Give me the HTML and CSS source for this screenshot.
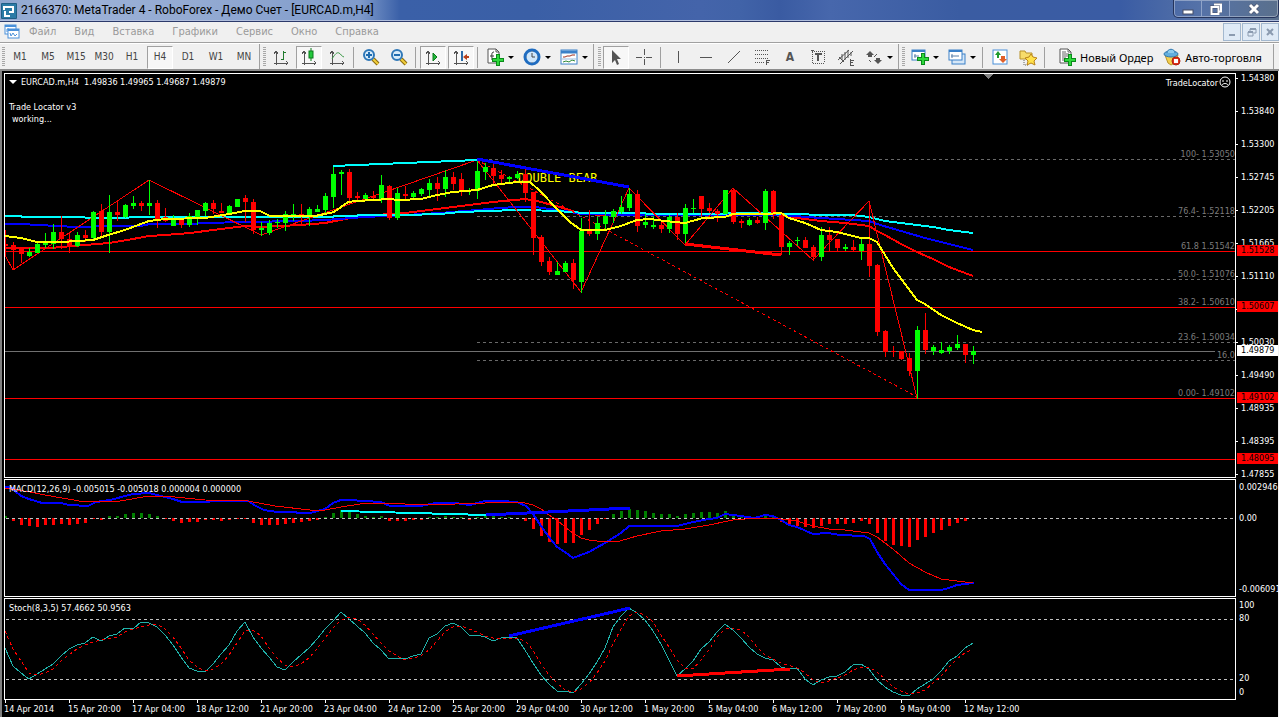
FILE: index.html
```html
<!DOCTYPE html>
<html lang="ru">
<head>
  <meta charset="UTF-8">
  <meta name="viewport" content="width=device-width, initial-scale=1.0">
  <title>MetaTrader 4 - EURCAD.m,H4</title>
  <link rel="stylesheet" href="styles.css">
</head>
<body>
  <header class="titlebar">
    <svg class="app-icon" viewBox="0 0 16 16"><rect width="16" height="16" rx="1" fill="#1f5f86"/><rect x="1" y="1" width="14" height="14" fill="#2b7ba6"/><path d="M3 7V4h9v5H8M4 8v5h5" fill="none" stroke="#fff" stroke-width="2"/></svg>
    <h1 class="title">2166370: MetaTrader 4 - RoboForex - Демо Счет - [EURCAD.m,H4]</h1>
    <div class="win-controls">
      <button class="win-btn" aria-label="Свернуть"><svg width="12" height="12"><rect x="1" y="7" width="10" height="4" fill="#fff" stroke="#444c66"/></svg></button>
      <button class="win-btn" aria-label="Развернуть"><svg width="12" height="12"><path d="M4 1.500h7v7h-2M1.500 4h7v7h-7z" fill="none" stroke="#444c66" stroke-width="3"/><path d="M4 1.500h7v7h-2M1.500 4h7v7h-7z" fill="none" stroke="#fff" stroke-width="2"/></svg></button>
      <button class="win-btn win-close" aria-label="Закрыть"><svg width="12" height="12"><path d="M2 2l8 8M10 2l-8 8" stroke="#444c66" stroke-width="4"/><path d="M2 2l8 8M10 2l-8 8" stroke="#fff" stroke-width="3"/></svg></button>
    </div>
  </header>

  <nav class="menubar">
    <svg class="menu-icon" viewBox="0 0 16 16"><rect x="1" y="1" width="11" height="9" fill="#fff" stroke="#4a90d9"/><path d="M1 2h11" stroke="#4a90d9" stroke-width="2"/><path d="M3 8V5h2v2h2" fill="none" stroke="#4a90d9"/><rect x="4" y="5" width="11" height="9" fill="#fff" stroke="#4a90d9"/><path d="M4 6h11" stroke="#4a90d9" stroke-width="2"/><path d="M6 9l1 3 2-3 2 3 2-2" fill="none" stroke="#4a90d9"/></svg>
    <a class="menu-link" href="#">Файл</a>
    <a class="menu-link" href="#">Вид</a>
    <a class="menu-link" href="#">Вставка</a>
    <a class="menu-link" href="#">Графики</a>
    <a class="menu-link" href="#">Сервис</a>
    <a class="menu-link" href="#">Окно</a>
    <a class="menu-link" href="#">Справка</a>
    <div class="mdi-controls">
      <button class="mdi-btn" aria-label="Свернуть окно"><svg width="11" height="11"><path d="M2 8h6" stroke="#8b9bb0" stroke-width="2"/></svg></button>
      <button class="mdi-btn" aria-label="Восстановить окно"><svg width="11" height="11"><path d="M4 4V2h6v4H8M2 5h5v4H2z" fill="none" stroke="#8b9bb0"/><path d="M4 2h6M2 5h5" stroke="#8b9bb0" stroke-width="2"/></svg></button>
      <button class="mdi-btn" aria-label="Закрыть окно"><svg width="11" height="11"><path d="M2 2l6 6M8 2l-6 6" stroke="#8b9bb0" stroke-width="2"/></svg></button>
    </div>
  </nav>

  <div class="toolbar">
    <div class="strip">
      <span class="grip"></span>
      <button class="tool">M1</button>
      <button class="tool">M5</button>
      <button class="tool">M15</button>
      <button class="tool">M30</button>
      <button class="tool">H1</button>
      <button class="tool pressed">H4</button>
      <button class="tool">D1</button>
      <button class="tool">W1</button>
      <button class="tool">MN</button>
    </div>

    <div class="strip">
      <span class="grip"></span>
      <button class="tool" aria-label="Бары"><svg class="icon" viewBox="0 0 18 18"><path class="axes" d="M4 3v14M2 15h14M2 6l2-3 2 3M14 13l2 2-2 2"/><path class="bars" d="M11 3v9M11 4h3M9 11h2"/></svg></button>
      <button class="tool pressed" aria-label="Свечи"><svg class="icon" viewBox="0 0 18 18"><path class="axes" d="M4 3v14M2 15h14M2 6l2-3 2 3M14 13l2 2-2 2"/><path d="M11 0v13" stroke="#0a7a1a"/><rect x="9" y="3" width="4" height="7" fill="#22c83c" stroke="#0a7a1a"/></svg></button>
      <button class="tool" aria-label="Линия"><svg class="icon" viewBox="0 0 18 18"><path class="axes" d="M4 3v14M2 15h14M2 6l2-3 2 3M14 13l2 2-2 2"/><path d="M4 11C7 6 9 4 11 5s2 3 5 4" fill="none" stroke="#3c9a48"/></svg></button>
      <span class="sep"></span>
      <button class="tool" aria-label="Увеличить"><svg class="icon" viewBox="0 0 18 18"><path d="M11 11l5 5" stroke="#8a6a10" stroke-width="4"/><path d="M11 11l5 5" stroke="#f2cf3c" stroke-width="2"/><circle cx="7" cy="7" r="5" fill="#d8ecfa" stroke="#2f78b8" stroke-width="2"/><path d="M7 4v6M4 7h6" stroke="#1f6cb0" stroke-width="2"/></svg></button>
      <button class="tool" aria-label="Уменьшить"><svg class="icon" viewBox="0 0 18 18"><path d="M11 11l5 5" stroke="#8a6a10" stroke-width="4"/><path d="M11 11l5 5" stroke="#f2cf3c" stroke-width="2"/><circle cx="7" cy="7" r="5" fill="#d8ecfa" stroke="#2f78b8" stroke-width="2"/><path d="M4 7h6" stroke="#1f6cb0" stroke-width="2"/></svg></button>
      <span class="sep"></span>
      <button class="tool pressed" aria-label="Автопрокрутка"><svg class="icon" viewBox="0 0 18 18"><path class="axes" d="M4 3v14M2 15h14M2 6l2-3 2 3M14 13l2 2-2 2"/><path d="M9 5l4 4-4 4z" fill="#22b83c" stroke="#0a7a1a"/></svg></button>
      <button class="tool pressed" aria-label="Сдвиг графика"><svg class="icon" viewBox="0 0 18 18"><path class="axes" d="M4 3v14M2 15h14M2 6l2-3 2 3M14 13l2 2-2 2"/><path d="M10 3v10" stroke="#2a6aa8" stroke-width="2"/><path d="M11 9l4-3v2h2v2h-2v2z" fill="#b8401a"/></svg></button>
      <span class="sep"></span>
      <button class="tool drop" aria-label="Индикаторы"><svg class="icon" viewBox="0 0 18 18"><path d="M2 1h8l3 3v11H2z" fill="#fff" stroke="#555"/><path d="M10 1v3h3" fill="none" stroke="#555"/><path d="M8 4c-3 0-2 3-2 8M4 8h4" fill="none" stroke="#333"/><path class="plus-edge" d="M12 6v12M6 12h12"/><path class="plus" d="M12 7v10M7 12h10"/></svg></button>
      <button class="tool drop" aria-label="Периоды"><svg class="icon" viewBox="0 0 18 18"><circle cx="9" cy="9" r="7" fill="#cfe6fa" stroke="#1f6cc0" stroke-width="3"/><path d="M9 5v4h3" fill="none" stroke="#444"/><path d="M9 3v1M9 14v1M3 9h1M14 9h1" stroke="#888"/></svg></button>
      <button class="tool drop" aria-label="Шаблоны"><svg class="icon" viewBox="0 0 18 18"><rect x="1" y="2" width="16" height="14" fill="#fff" stroke="#3a80c8"/><path d="M1 4h16" stroke="#3a80c8" stroke-width="3"/><path d="M3 9h2l2-1h3l2-1h3" fill="none" stroke="#a03020"/><path d="M3 14l3-1 3 1 3-2 3 1" fill="none" stroke="#2f8a3a"/><path d="M2 11h14" stroke="#9bbde0"/></svg></button>
    </div>

    <div class="strip strip-draw">
      <span class="grip"></span>
      <button class="tool pressed" aria-label="Курсор"><svg class="icon" viewBox="0 0 18 18"><path d="M5 2v13l3-3 2 5 2-1-2-5h4z" fill="#555"/></svg></button>
      <button class="tool" aria-label="Перекрестие"><svg class="icon" viewBox="0 0 18 18"><path class="ink" d="M9 1v6M9 11v6M1 9h6M11 9h6M9 9h1"/></svg></button>
      <span class="sep"></span>
      <button class="tool" aria-label="Вертикальная линия"><svg class="icon" viewBox="0 0 18 18"><path class="ink" d="M9 3v12"/></svg></button>
      <button class="tool" aria-label="Горизонтальная линия"><svg class="icon" viewBox="0 0 18 18"><path class="ink" d="M3 9h12"/></svg></button>
      <button class="tool" aria-label="Трендовая линия"><svg class="icon" viewBox="0 0 18 18"><path class="ink soft" d="M3 15L15 3"/></svg></button>
      <button class="tool" aria-label="Фибоначчи"><svg class="icon" viewBox="0 0 18 18"><path class="ink dots" d="M2 2h14M2 6h14M2 10h14M2 14h9"/><path class="ink" d="M13 17v-5h4M13 14h3"/></svg></button>
      <button class="tool letter" aria-label="Текст">A</button>
      <button class="tool" aria-label="Текстовая метка"><svg class="icon" viewBox="0 0 18 18"><rect class="ink dots" x="3" y="3" width="12" height="12"/><path class="ink" d="M6 6h7M9 6v7" stroke-width="2"/><path class="ink" d="M2 2h3"/></svg></button>
      <button class="tool" aria-label="Каналы"><svg class="icon" viewBox="0 0 18 18"><path class="ink soft" d="M1 12L12 2M3 16L16 3M5 6v6M8 4v8M11 2v8M14 4v4M2 9l5 5"/><path class="ink" d="M13 11v6M13 12h4M13 14h3M13 17h4"/></svg></button>
      <button class="tool drop" aria-label="Стрелки"><svg class="icon" viewBox="0 0 18 18"><path d="M5 3l4 4H7v2H3V7H1zM13 16l-4-4h2v-2h4v2h2z" fill="#555"/><path class="ink soft" d="M4 12l2 2M9 9l3-3"/></svg></button>
    </div>

    <div class="strip strip-last">
      <span class="grip"></span>
      <button class="tool drop" aria-label="Новый график"><svg class="icon" viewBox="0 0 18 18"><rect x="1" y="2" width="13" height="10" fill="#fff" stroke="#3a80c8"/><path d="M1 3h13" stroke="#3a80c8" stroke-width="2"/><path d="M4 6v4M3 8h5" stroke="#5a80a8"/><path class="plus-edge" d="M12 5v12M6 11h12"/><path class="plus" d="M12 6v10M7 11h10"/></svg></button>
      <button class="tool drop" aria-label="Профили"><svg class="icon" viewBox="0 0 18 18"><rect x="4" y="6" width="13" height="10" fill="#d6e7f7" stroke="#3a80c8"/><rect x="1" y="2" width="13" height="10" fill="#fff" stroke="#3a80c8"/><path d="M1 3h13" stroke="#3a80c8" stroke-width="2"/><path d="M4 6v4M3 8h8" stroke="#5a80a8"/></svg></button>
      <span class="sep"></span>
      <button class="tool" aria-label="Обзор рынка"><svg class="icon" viewBox="0 0 18 18"><rect x="2" y="2" width="14" height="14" fill="#fff" stroke="#4a90d9"/><path d="M7 3l3 4H8v3H6V7H4z" fill="#1f9a2c"/><path d="M12 15l-4-4h2V8h4v3h2z" fill="#e0602a"/></svg></button>
      <button class="tool" aria-label="Навигатор"><svg class="icon" viewBox="0 0 18 18"><path d="M1 3h5l1 2h6v6H1z" fill="#f7dc6a" stroke="#b8922a"/><path d="M5 12v5h5" fill="none" stroke="#666" stroke-dasharray="1 1"/><path d="M12 6l2 3 4 1-3 3 1 4-4-2-4 2 1-4-3-3 4-1z" fill="#ffe14a" stroke="#b8821a"/></svg></button>
      <span class="sep"></span>
      <button class="tool wide"><svg class="icon" viewBox="0 0 18 18"><path d="M2 1h8l3 3v11H2z" fill="#fff" stroke="#555"/><path d="M10 1v3h3M4 4h4M4 6h7M4 8h7M4 10h4M4 12h3" fill="none" stroke="#666"/><path class="plus-edge" d="M12 6v12M6 12h12"/><path class="plus" d="M12 7v10M7 12h10"/></svg>Новый Ордер</button>
      <button class="tool wide"><svg class="icon" viewBox="0 0 18 18"><path d="M2 7h13l-3 8-4 2-3-2z" fill="#f4cf4e" stroke="#b8922a"/><ellipse cx="8" cy="6" rx="7" ry="3" fill="#62aede" stroke="#2f78b0"/><path d="M4 5c0-5 8-5 8 0" fill="#8ccbee" stroke="#2f78b0"/><circle cx="13" cy="13" r="4" fill="#e0301a" stroke="#b02010"/><rect x="11" y="11" width="4" height="4" fill="#fff"/></svg>Авто-торговля</button>
    </div>
  </div>

  <main class="workspace">
    <section class="row row-price">
      <div class="pane">
        <svg class="plot" id="price">
          <g class="fib">
            <line x1="472" y1="85" x2="100%" y2="85"/>
            <line x1="472" y1="142" x2="100%" y2="142"/>
            <line x1="472" y1="205" x2="100%" y2="205"/>
            <line x1="472" y1="268" x2="100%" y2="268"/>
            <line x1="472" y1="286" x2="100%" y2="286"/>
          </g>
          <g class="order-lines">
            <line x1="0" y1="177" x2="100%" y2="177"/>
            <line x1="0" y1="233" x2="100%" y2="233"/>
            <line x1="0" y1="324" x2="100%" y2="324"/>
            <line x1="0" y1="385" x2="100%" y2="385"/>
            <line class="bid" x1="0" y1="277" x2="100%" y2="277"/>
          </g>
          <svg class="fib-gap" x="100%"><rect x="-20" y="275" width="20" height="10"/></svg>
          <g class="fib-text">
            <text x="100%" y="83">100- 1.53050</text>
            <text x="100%" y="140">76.4- 1.52118</text>
            <text x="100%" y="175">61.8 1.51542</text>
            <text x="100%" y="203">50.0- 1.51076</text>
            <text x="100%" y="231">38.2- 1.50610</text>
            <text x="100%" y="266">23.6- 1.50034</text>
            <text x="100%" y="284">16.0</text>
            <text x="100%" y="322">0.00- 1.49102</text>
          </g>
          <g transform="translate(-5 -74)">
            <polyline class="red w2" points="5,248 50,248 85,245 109,243 133,239 149,236 165,235 190,233 221,229 245,226 260,227 300,225 325,223 345,219 365,216 389,214 405,213 437,209 461,206 493,202 525,199 537,201 560,207 575,212 590,214 600,215 781,215 797,218 821,221 845,223 869,226 877,231 885,235 901,244 917,252 933,259 949,267 973,276"/>
            <polyline class="blue w2" points="5,224 22,224 38,225 77,227 110,226 140,226 150,224 190,224 205,223 245,222 300,221 325,220 365,217 405,215 440,213 477,210 500,208 517,207 535,207 565,211 581,214 629,215 725,215 781,215 821,218 853,220 869,221 877,224 901,231 925,238 949,244 973,250"/>
            <polyline class="cyan w2" points="5,216 21,216 22,217 60,217 109,218 150,217 333,217 334,216 357,216 358,215 405,215 440,214 460,212 517,210 530,210 575,212 581,213 645,213 646,214 725,214 728,213 750,213 797,214 821,215 853,215 869,217 885,221 901,223 917,225 933,227 949,230 973,233"/>
            <text class="pattern" x="518" y="182">DOUBLE BEAR</text>
            <polyline class="red w1" points="5,255 13,270 149,180 261,235 477,160 581,292 629,188 685,245 733,188 813,260 869,201 917,398"/>
            <line class="red w1 dash" x1="477" y1="160" x2="917" y2="397"/>
          </g>
          <g id="candles" transform="translate(-5 -74)"></g>
          <g transform="translate(-5 -74)">
            <polyline class="yellow w2" points="5,236 21,238 37,242 61,242 93,240 105,236 125,230 149,221 165,219 205,218 229,214 245,211 260,211 270,216 315,216 325,214 334,212 348,202 357,201 373,200 389,199 399,200 421,199 437,195 453,192 477,190 493,185 517,182 530,182 540,191 557,209 570,222 581,230 605,230 621,226 637,220 650,219 665,221 685,223 703,218 725,217 733,214 765,214 781,213 789,218 805,223 821,230 837,232 861,238 869,238 877,242 893,268 917,300 925,304 941,315 957,323 973,330 982,332"/>
            <line class="cyan w2" x1="333" y1="166" x2="477" y2="160"/>
            <line class="blue w3" x1="477" y1="159" x2="629" y2="187"/>
            <line class="red w3" x1="685" y1="244" x2="781" y2="255"/>
          </g>
          <path class="shift-mark" d="M978 0h10l-5 5z"/>
        </svg>
        <div class="pane-info">
          <p class="symbol">EURCAD.m,H4&nbsp; 1.49836 1.49965 1.49687 1.49879</p>
          <p>Trade Locator v3</p>
          <p class="status">working...</p>
        </div>
        <div class="expert">TradeLocator<svg width="13" height="13" viewBox="0 0 13 13"><circle cx="6" cy="6" r="5" fill="none" stroke="#fff"/><path d="M4 4v2M8 4v2M3 9c1-2 5-2 6 0" fill="none" stroke="#fff"/></svg></div>
      </div>
      <div class="axis axis-price">
        <span>1.54380</span>
        <span>1.53840</span>
        <span>1.53300</span>
        <span>1.52745</span>
        <span>1.52205</span>
        <span>1.51665</span>
        <span>1.51110</span>
        <span></span>
        <span>1.50030</span>
        <span>1.49490</span>
        <span>1.48935</span>
        <span>1.48395</span>
        <span>1.47855</span>
        <b class="tag tag-1">1.51528</b>
        <b class="tag tag-2">1.50607</b>
        <b class="tag tag-bid">1.49879</b>
        <b class="tag tag-3">1.49102</b>
        <b class="tag tag-4">1.48095</b>
      </div>
    </section>

    <section class="row row-macd">
      <div class="pane">
        <svg class="plot">
          <g id="histogram" transform="translate(-5 -480)"></g>
          <line class="level" x1="1" y1="38" x2="100%" y2="38"/>
          <g transform="translate(-5 -480)">
            <polyline class="blue w2" points="5,487 13,488 15,491 21,496 29,499 42,503 61,503 69,505 88,506 96,502 110,500 133,494 149,493 157,495 173,499 182,502 240,501 248,501 256,506 264,510 277,512 293,512 300,513 310,513 325,509 333,503 341,500 349,500 365,501 381,502 390,506 420,506 436,503 455,503 470,505 485,501 500,501 517,502 526,506 533,514 541,526 549,537 557,547 565,552 573,558 589,552 605,543 621,533 629,526 677,526 693,522 709,519 717,518 725,514 733,515 755,518 765,515 773,516 781,520 789,525 797,527 813,534 828,533 840,535 864,536 870,539 877,552 885,564 893,574 901,584 909,590 941,590 949,588 957,585 965,584 974,583"/>
            <polyline class="red w1" points="5,488 30,492 45,495 85,502 120,501 149,496 165,496 205,500 248,501 275,506 310,510 325,510 341,507 360,504 380,503 430,505 455,504 485,503 500,502 525,503 533,505 541,509 549,515 557,520 565,527 573,533 581,538 589,540 605,542 620,541 637,536 661,531 685,529 709,525 733,520 757,518 781,519 797,521 813,526 829,529 845,530 869,533 877,537 885,543 893,549 909,563 925,572 941,579 957,581 965,582 973,582"/>
            <line class="cyan w2" x1="341" y1="511" x2="486" y2="515"/>
            <line class="blue w3" x1="486" y1="515" x2="630" y2="508"/>
          </g>
        </svg>
        <p class="pane-title">MACD(12,26,9) -0.005015 -0.005018 0.000004 0.000000</p>
      </div>
      <div class="axis axis-macd">
        <span>0.002946</span>
        <span>0.00</span>
        <span>-0.006091</span>
      </div>
    </section>

    <section class="row row-stoch">
      <div class="pane">
        <svg class="plot">
          <line class="level" x1="1" y1="20" x2="100%" y2="20"/>
          <line class="level" x1="1" y1="80" x2="100%" y2="80"/>
          <g transform="translate(-5 -599)">
            <polyline class="teal w1" points="5,648 13,666 21,673 29,679 53,664 61,656 69,649 77,645 85,643 93,637 101,641 109,636 117,634 125,628 133,629 141,622 149,623 157,627 165,635 173,645 181,657 189,668 197,671 205,672 213,664 221,654 229,645 237,631 245,622 253,637 261,648 269,657 277,667 285,670 293,662 309,648 317,639 325,629 333,621 341,612 349,619 357,626 365,633 373,643 381,650 389,659 397,658 405,659 413,656 421,654 429,638 437,634 445,626 453,623 461,627 469,635 477,635 485,637 493,641 501,638 509,637 517,638 525,650 533,663 541,675 549,684 557,691 565,691 573,693 581,684 589,674 597,662 605,648 613,627 621,616 629,608 637,613 645,620 653,631 661,644 669,660 677,676 685,669 693,661 701,649 709,642 717,632 725,624 733,630 741,638 749,647 757,654 765,658 773,660 781,667 789,669 797,668 805,679 813,685 821,680 829,677 837,676 845,672 853,665 861,664 869,669 877,680 885,687 893,692 901,695 909,696 917,689 925,684 933,679 941,671 949,661 957,656 965,648 973,643"/>
            <polyline class="red w1 dash" points="5,631 13,649 21,661 29,673 37,675 45,673 53,669 61,661 69,655 77,649 85,645 93,642 101,640 117,637 125,632 133,629 149,625 157,624 165,629 173,637 181,648 189,660 197,667 205,671 213,669 221,664 229,655 237,643 245,631 253,630 261,636 269,648 277,658 285,665 293,667 301,664 309,658 317,649 325,638 333,628 341,620 349,617 357,619 365,625 373,634 381,643 389,651 397,656 405,660 421,656 429,650 437,641 445,632 453,627 461,626 469,629 477,632 485,636 493,638 501,639 517,638 525,641 533,650 541,664 549,675 557,683 565,690 573,692 581,689 589,683 597,673 605,661 613,644 621,629 629,616 637,612 645,615 653,622 661,635 669,647 677,660 685,668 693,669 701,660 709,650 717,637 725,629 733,628 741,630 749,637 757,647 765,655 773,659 781,663 797,668 805,673 813,680 821,683 829,681 845,675 853,670 861,667 869,667 877,672 885,679 893,687 901,691 909,694 917,693 925,690 933,683 941,676 949,667 957,659 965,653 973,649"/>
            <line class="blue w3" x1="509" y1="636" x2="630" y2="608"/>
            <line class="red w3" x1="677" y1="676" x2="790" y2="669"/>
          </g>
        </svg>
        <p class="pane-title">Stoch(8,3,5) 57.4662 50.9563</p>
      </div>
      <div class="axis axis-stoch">
        <span>100</span>
        <span>80</span>
        <span>20</span>
        <span>0</span>
      </div>
    </section>

    <footer class="time-axis">
      <span>14 Apr 2014</span>
      <span>15 Apr 20:00</span>
      <span>17 Apr 04:00</span>
      <span>18 Apr 12:00</span>
      <span>21 Apr 20:00</span>
      <span>23 Apr 04:00</span>
      <span>24 Apr 12:00</span>
      <span>25 Apr 20:00</span>
      <span>29 Apr 04:00</span>
      <span>30 Apr 12:00</span>
      <span>1 May 20:00</span>
      <span>5 May 04:00</span>
      <span>6 May 12:00</span>
      <span>7 May 20:00</span>
      <span>9 May 04:00</span>
      <span>12 May 12:00</span>
    </footer>
  </main>
  <script src="chart.js"></script>
</body>
</html>
```
FILE: styles.css
```css
* {
  box-sizing: border-box;
  margin: 0;
  padding: 0;
}

body {
  display: flex;
  flex-direction: column;
  height: 100vh;
  overflow: hidden;
  background: #f0f0f0;
  font-family: "DejaVu Sans Condensed", "DejaVu Sans", sans-serif;
  font-size: 9px;
  line-height: 10px;
}

button {
  font: inherit;
  border: 0;
  background: none;
}

/* window title */
.titlebar {
  display: flex;
  align-items: flex-start;
  height: 22px;
  padding-left: 1px;
  background:
    linear-gradient(90deg, #8ea6cf 0, #9db2d8 60px, #93aad2 200px, #7f9bcb 360px, #3a60a8 400px, #3a5fa6 530px, #4464aa 700px, #4163a8 740px, #3a5ba2 780px, #4767ac 830px, #3a5ca2 960px, #3a5ca4 1120px, #5572a8 1200px, #5a708c 100%);
  border-bottom: 1px solid #2c3a6b;
  box-shadow: inset 0 -1px #b0bedd;
}

.app-icon {
  width: 16px;
  height: 16px;
  margin-top: 3px;
}

.title {
  flex: 1;
  margin-left: 4px;
  color: #000;
  font: 12px/21px Roboto, "Noto Sans", sans-serif;
  white-space: nowrap;
}

.win-controls {
  display: flex;
  height: 18px;
  border: 1px solid #25345c;
  border-top: 0;
  border-radius: 0 0 5px 5px;
  box-shadow: inset 0 0 0 1px rgba(255, 255, 255, 0.35);
}

.win-btn {
  display: flex;
  align-items: center;
  justify-content: center;
  width: 28px;
  border-right: 1px solid #8fa3c8;
}

.win-close {
  width: 48px;
  border-right: 0;
}

/* menu */
.menubar {
  display: flex;
  align-items: center;
  height: 21px;
  padding-left: 4px;
  border-bottom: 1px solid #a0a0a0;
}

.menu-icon {
  width: 16px;
  height: 16px;
  margin-right: 9px;
}

.menu-link {
  margin-right: 18px;
  color: #9a9a9a;
  font-size: 11px;
  line-height: 18px;
  text-decoration: none;
}

.mdi-controls {
  display: flex;
  gap: 1px;
  margin-left: auto;
}

.mdi-btn {
  display: flex;
  align-items: center;
  justify-content: center;
  width: 18px;
  height: 18px;
  border: 1px solid #a3b8cf;
  background: #dfeaf6;
}

/* toolbars */
.toolbar {
  display: flex;
  height: 28px;
  border-top: 1px solid #fff;
  border-bottom: 2px solid #8c8c8c;
}

.strip {
  display: flex;
  align-items: center;
  padding: 1px 1px 0 3px;
  border-right: 1px solid #a0a0a0;
}

.strip:first-child {
  padding-left: 2px;
}

.strip-draw {
  padding-left: 4px;
}

.strip-last {
  flex: 1;
  margin-right: 5px;
}

.grip {
  width: 3px;
  height: 20px;
  margin-right: 1px;
  background: repeating-linear-gradient(#a8a8a8 0 1px, #f0f0f0 1px 2px);
}

.sep {
  width: 6px;
  height: 21px;
  background: linear-gradient(90deg, transparent 2px, #a0a0a0 2px 3px, transparent 3px);
}

.tool {
  display: flex;
  align-items: center;
  justify-content: center;
  flex: none;
  width: 28px;
  height: 23px;
  color: #444;
  font-size: 10px;
}

.tool.pressed {
  width: 26px;
  margin: 0 1px;
  border: 1px solid #a0a0a0;
  border-right-color: #fff;
  border-bottom-color: #fff;
  background: #f7f7f7;
}

.tool.drop {
  justify-content: flex-start;
  gap: 4px;
  width: 37px;
  padding-left: 5px;
}

.tool.drop::after {
  content: "";
  border: 3px solid transparent;
  border-top-color: #000;
  border-bottom: 0;
}

.tool.letter {
  font-size: 12px;
  font-weight: bold;
  color: #555;
}

.tool.wide {
  gap: 4px;
  width: auto;
  padding-left: 10px;
  color: #000;
  font: 11px "Noto Sans", sans-serif;
}

.icon {
  flex: none;
  width: 18px;
  height: 18px;
}

.axes {
  fill: none;
  stroke: #555;
  shape-rendering: crispEdges;
}

.bars {
  fill: none;
  stroke: #1f7a2c;
  shape-rendering: crispEdges;
}

.ink {
  fill: none;
  stroke: #555;
  shape-rendering: crispEdges;
}

.ink.soft {
  shape-rendering: auto;
}

.dots {
  stroke-dasharray: 1 1;
}

.plus {
  stroke: #2ed83c;
  stroke-width: 2;
}

.plus-edge {
  stroke: #0a8a1a;
  stroke-width: 4;
}

/* chart window */
.workspace {
  display: flex;
  flex: 1;
  flex-direction: column;
  gap: 1px;
  min-height: 0;
  padding: 2px 0 0 2px;
  border-left: 2px solid #808080;
  border-right: 1px solid #f0f0f0;
  background: #000;
  color: #fff;
}

.row {
  display: grid;
  grid-template-columns: 1fr 42px;
  flex: none;
}

.row-price {
  flex: 1;
  min-height: 0;
}

.row-macd {
  height: 118px;
}

.row-stoch {
  height: 102px;
}

.pane {
  position: relative;
  min-width: 0;
  min-height: 0;
  border: 1px solid #fff;
}

.plot {
  display: block;
  position: absolute;
  width: 100%;
  height: 100%;
  shape-rendering: crispEdges;
}

.pane-info {
  position: absolute;
  top: 2px;
  left: 4px;
  line-height: 12px;
}

.symbol {
  margin-bottom: 13px;
  padding-left: 12px;
}

.symbol::before {
  content: "";
  float: left;
  margin: 4px 0 0 -12px;
  border: 4px solid transparent;
  border-top-color: #fff;
  border-bottom: 0;
}

.status {
  padding-left: 3px;
}

.expert {
  display: flex;
  align-items: center;
  gap: 1px;
  position: absolute;
  top: 2px;
  right: 3px;
}

.pane-title {
  position: absolute;
  top: 4px;
  left: 4px;
}

/* lines on the charts */
.w1,
.w2,
.w3 {
  fill: none;
}

.w1 { stroke-width: 1; }
.w2 { stroke-width: 2; }
.w3 { stroke-width: 3; }

.red { stroke: #f00; }
.blue { stroke: #00f; }
.cyan { stroke: #0ff; }
.yellow { stroke: #ff0; }
.teal { stroke: #20b2aa; }

.dash {
  stroke-dasharray: 3 3;
}

.level {
  stroke: #c0c0c0;
  stroke-dasharray: 3 3;
}

.fib {
  stroke: #696969;
  stroke-dasharray: 3 3;
}

.fib-text {
  fill: #7c7c7c;
  text-anchor: end;
}

.fib-gap {
  overflow: visible;
}

.order-lines {
  stroke: #f00;
}

.bid {
  stroke: #707070;
}

.pattern {
  fill: #ff0;
  font: 12px "DejaVu Sans Mono", monospace;
}

.shift-mark {
  fill: #808080;
}

.up { fill: #0f0; }
.down { fill: #f00; }
.bar-up { fill: #008000; }

/* scales */
.axis {
  display: flex;
  flex-direction: column;
  position: relative;
  min-height: 0;
  white-space: nowrap;
}

.axis-price {
  justify-content: space-between;
  margin-bottom: -1px;
}

.axis-price span {
  display: flex;
  align-items: center;
  gap: 3px;
  height: 10px;
}

.axis-price span::before {
  content: "";
  width: 2px;
  height: 1px;
  background: #fff;
}

.axis-macd {
  justify-content: space-between;
  padding: 3px 0 3px 3px;
}

.axis-macd span:nth-child(2) {
  margin-bottom: 40px;
}

.axis-stoch {
  padding: 2px 0 0 3px;
}

.axis-stoch span:nth-child(2) {
  margin: 3px 0 50px;
}

.axis-stoch span:nth-child(4) {
  margin-top: 4px;
}

.tag {
  position: absolute;
  left: 1px;
  right: 0;
  height: 11px;
  padding-left: 4px;
  background: #f00;
  color: #000;
  font-weight: normal;
  line-height: 11px;
}

.tag-1 { top: 172px; }
.tag-2 { top: 228px; }
.tag-3 { top: 319px; }
.tag-4 { top: 380px; }

.tag-bid {
  top: 272px;
  background: #fff;
}

.time-axis {
  display: flex;
  height: 17px;
  margin-top: -1px;
}

.time-axis span {
  flex: none;
  width: 64px;
  white-space: nowrap;
}

.time-axis span::before {
  content: "";
  display: block;
  width: 1px;
  height: 3px;
  margin: 0 0 1px 1px;
  background: #fff;
}
```
FILE: chart.js
```js
const NS = 'http://www.w3.org/2000/svg';
const FIRST = 5;
const STEP = 8;

// direction, high, body top, body bottom, low
const candles = `
d230,244,246,256 d242,245,250,270 d247,247,254,263 u248,252,256,257 u242,244,253,253
u233,243,245,248 u224,232,244,249 d216,232,239,249 d233,239,246,253 u232,235,246,247
d230,235,238,242 u211,212,238,239 d204,211,232,237 u195,212,232,253 d201,212,215,221
u204,205,217,218 u196,203,206,209 d201,203,206,211 u180,203,206,215 d200,203,219,228
d208,217,221,222 u215,220,226,226 d218,220,225,228 u213,216,225,227 u210,210,218,225
u202,203,211,216 d200,203,209,214 d203,211,213,213 u205,206,213,214 u199,199,207,207
d195,198,202,222 d199,202,230,234 u222,228,230,236 u220,223,233,235 u219,222,223,228
u211,214,223,231 u204,214,215,221 d204,214,216,225 u207,209,216,226 u205,209,212,212
u193,196,210,214 u166,174,197,208 u170,172,174,195 d169,172,198,204 d192,196,198,201
u193,195,199,200 d191,196,198,200 u175,185,199,203 d185,186,218,220 u188,193,218,220
d186,194,196,200 u191,193,197,198 u188,189,194,196 u179,183,190,197 d177,183,189,201
u170,177,189,197 d172,177,184,190 d173,179,191,196 u188,190,191,195 u159,171,191,199
u163,167,172,180 d163,168,176,185 d170,175,179,185 u176,177,179,183 u171,174,178,179
d167,174,193,202 d192,192,238,255 d235,237,262,266 d257,261,272,275 u262,271,275,275
u261,263,272,272 d259,263,280,289 u218,231,282,293 d210,231,234,236 u217,223,234,240
u210,216,224,231 u209,211,217,223 u196,207,212,214 u188,194,208,211 d190,194,226,232
u214,222,225,228 u216,225,227,229 d220,225,229,233 u215,217,229,233 d213,217,234,240
u204,208,234,245 u199,208,209,213 d196,196,209,216 d203,208,211,213 d209,211,214,222
u190,190,214,214 d188,190,222,224 d219,221,223,228 u218,220,225,226 d217,220,223,224
u189,191,223,230 d190,191,215,219 d213,215,247,255 u241,243,247,255 u237,240,241,246
d237,240,248,248 d245,247,257,261 u227,235,257,261 d227,235,240,251 d239,239,248,251
u244,247,249,251 d240,247,250,251 u238,244,251,260 d201,244,266,277 d264,265,332,336
d330,331,352,357 d346,351,352,357 d351,351,359,360 d353,358,371,376 u326,330,371,399
d313,330,350,354 u345,347,351,355 u342,350,353,354 u345,347,351,354 u335,344,348,350
d344,344,355,363 u346,351,355,364`.trim().split(/\s+/);

// MACD histogram, one value per candle
const histogram = [
  2, -3, -7, -8, -9, -7, -7, -6, -7, -6, -5, -1, -2, 2, 2, 4, 5, 5, 4, 2,
  -1, -3, -5, -4, -4, -2, -2, -3, -2, -1, -1, -5, -7, -7, -7, -6, -5, -4, -3, -2,
  1, 5, 8, 7, 4, 2, 1, 2, -3, -3, -3, -2, -2, 1, 1, 2, 1, 1, -2, 1,
  2, 2, 1, 1, 0, -3, -11, -18, -24, -26, -25, -25, -17, -12, -6, -1, 4, 7, 9, 8,
  7, 5, 4, 4, 2, 4, 5, 6, 6, 5, 7, 4, 2, 1, 0, 3, 2, -4, -7, -8,
  -9, -10, -8, -6, -6, -6, -5, -3, -6, -15, -23, -27, -28, -29, -22, -19, -15, -12, -8, -5, -3
];
const ZERO = 518;

function addRect(parent, x, y, width, height, name) {
  const rect = document.createElementNS(NS, 'rect');
  rect.setAttribute('x', x);
  rect.setAttribute('y', y);
  rect.setAttribute('width', width);
  rect.setAttribute('height', height);
  rect.setAttribute('class', name);
  parent.appendChild(rect);
}

const candleLayer = document.getElementById('candles');
candles.forEach((item, i) => {
  const name = item[0] === 'u' ? 'up' : 'down';
  const [high, top, bottom, low] = item.slice(1).split(',').map(Number);
  const x = FIRST + i * STEP;
  addRect(candleLayer, x, high, 1, low - high, name);
  addRect(candleLayer, x - 2, top, 5, bottom - top, name);
});

const barLayer = document.getElementById('histogram');
histogram.forEach((value, i) => {
  const x = FIRST + i * STEP - 1;
  if (value > 0) {
    addRect(barLayer, x, ZERO - value, 3, value, 'bar-up');
  } else {
    addRect(barLayer, x, ZERO, 3, -value, 'down');
  }
});
```
